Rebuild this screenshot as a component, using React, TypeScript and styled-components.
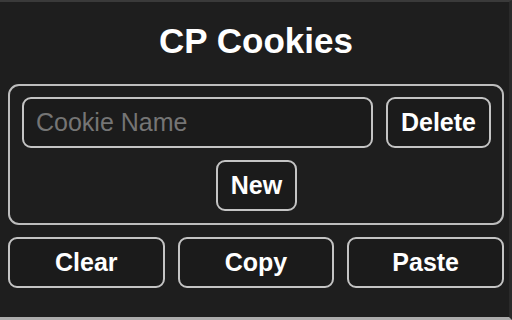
import React from 'react';
import styled, { createGlobalStyle } from 'styled-components';

const GlobalStyle = createGlobalStyle`
  html, body {
    margin: 0;
    padding: 0;
    background: #1e1e1e;
  }
  * {
    box-sizing: border-box;
  }
`;

const Frame = styled.div`
  width: 512px;
  height: 320px;
  background: #1e1e1e;
  border-top: 2px solid #3a3a3a;
  border-bottom: 3px solid #acacac;
  border-right: 3px solid #2a2a2a;
  padding: 0 5px 0 8px;
  display: flex;
  flex-direction: column;
  font-family: "Liberation Sans", Arial, sans-serif;
  color: #ffffff;
`;

const Title = styled.h1`
  margin: 0;
  height: 82px;
  display: flex;
  align-items: center;
  justify-content: center;
  font-size: 35px;
  font-weight: 700;
  padding-bottom: 4px;
`;

const Panel = styled.div`
  border: 2px solid #bdbdbd;
  border-radius: 11px;
  padding: 11px 11px 12px 12px;
  display: flex;
  flex-direction: column;
  align-items: center;
  gap: 12px;
`;

const Row = styled.div`
  display: flex;
  width: 100%;
  gap: 13px;
`;

const NameInput = styled.input`
  flex: 1;
  min-width: 0;
  height: 51px;
  border: 2px solid #c4c4c4;
  border-radius: 9px;
  background: #1b1b1b;
  color: #ffffff;
  font-family: "Liberation Sans", Arial, sans-serif;
  font-size: 25px;
  padding: 0 12px;
  outline: none;

  &::placeholder {
    color: #757575;
  }
`;

const Button = styled.button<{ $grow?: boolean }>`
  height: 51px;
  padding: 0 13px;
  flex: ${(p) => (p.$grow ? '1 1 0' : '0 0 auto')};
  border: 2px solid #c4c4c4;
  border-radius: 9px;
  background: #1b1b1b;
  color: #ffffff;
  font-family: "Liberation Sans", Arial, sans-serif;
  font-size: 25px;
  font-weight: 700;
  cursor: pointer;
`;

const ActionRow = styled(Row)`
  margin-top: 12px;
`;

export default function App() {
  return (
    <>
      <GlobalStyle />
      <Frame>
        <Title>CP Cookies</Title>
        <Panel>
          <Row>
            <NameInput placeholder="Cookie Name" />
            <Button>Delete</Button>
          </Row>
          <Button>New</Button>
        </Panel>
        <ActionRow>
          <Button $grow>Clear</Button>
          <Button $grow>Copy</Button>
          <Button $grow>Paste</Button>
        </ActionRow>
      </Frame>
    </>
  );
}
